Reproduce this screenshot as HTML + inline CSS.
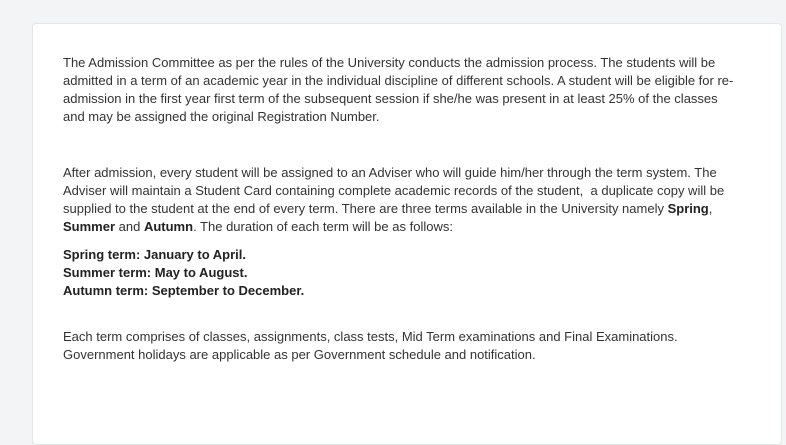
<!DOCTYPE html>
<html><head><style>
body{margin:0;background:#f3f4f5;width:786px;height:417px;overflow:hidden;font-family:"Liberation Sans",Arial,sans-serif;}
.card{position:absolute;left:32px;top:23px;width:748px;height:420px;background:#fff;border:1px solid #e4e5e7;border-radius:4px;}
.t{position:absolute;left:30px;width:710px;font-size:13px;line-height:18px;color:#333;margin:0;white-space:nowrap;}
b{color:#222}
</style></head><body>
<div class="card">
<p class="t" style="top:30px">The Admission Committee as per the rules of the University conducts the admission process. The students will be<br>admitted in a term of an academic year in the individual discipline of different schools. A student will be eligible for re-<br>admission in the first year first term of the subsequent session if she/he was present in at least 25% of the classes<br>and may be assigned the original Registration Number.</p>
<p class="t" style="top:140px">After admission, every student will be assigned to an Adviser who will guide him/her through the term system. The<br>Adviser will maintain a Student Card containing complete academic records of the student,&nbsp; a duplicate copy will be<br>supplied to the student at the end of every term. There are three terms available in the University namely <b>Spring</b>,<br><b>Summer</b> and <b>Autumn</b>. The duration of each term will be as follows:</p>
<p class="t" style="top:222px"><b>Spring term: January to April.<br>Summer term: May to August.<br>Autumn term: September to December.</b></p>
<p class="t" style="top:304px">Each term comprises of classes, assignments, class tests, Mid Term examinations and Final Examinations.<br>Government holidays are applicable as per Government schedule and notification.</p>
</div>
</body></html>
